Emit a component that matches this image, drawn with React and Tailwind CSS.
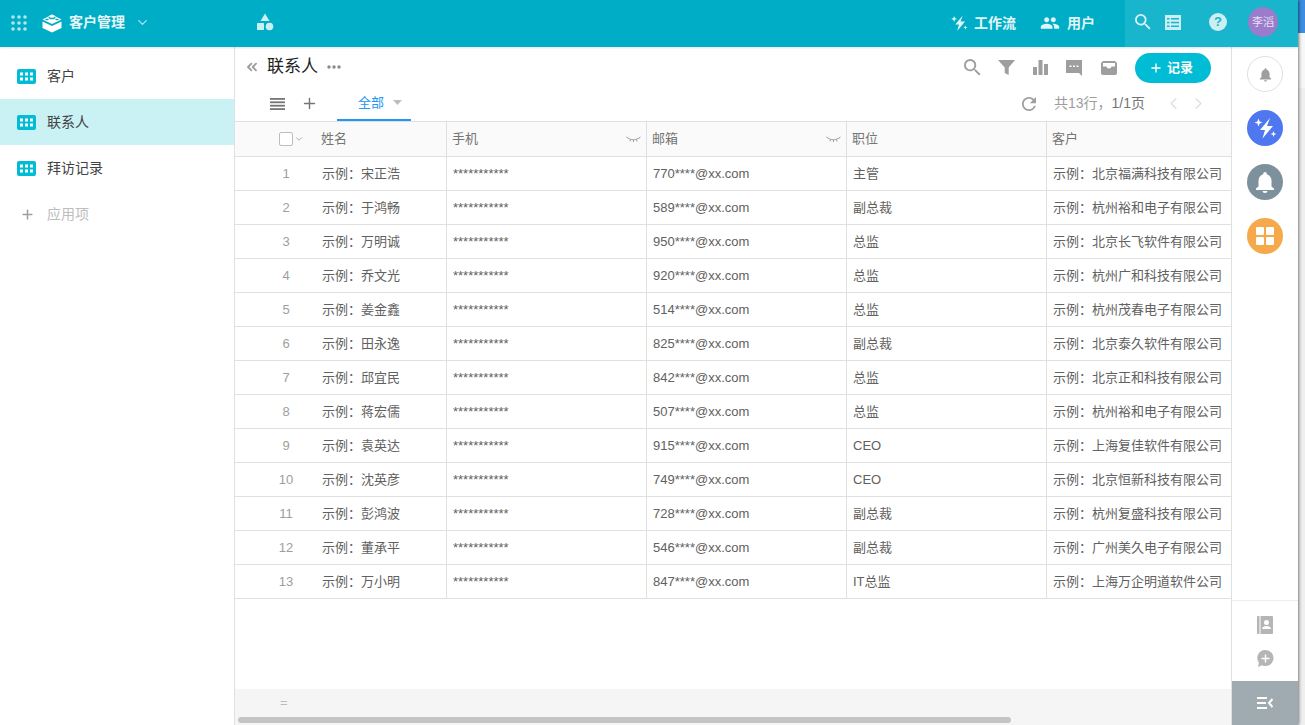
import React from 'react';
import { Plus, ChevronLeft, ChevronRight, ChevronDown, ChevronsLeft } from 'lucide-react';

const FONT = '"Liberation Sans","Noto Sans CJK SC",sans-serif';

const rows = [
  ['宋正浩', '770', '主管', '北京福满科技有限公司'],
  ['于鸿畅', '589', '副总裁', '杭州裕和电子有限公司'],
  ['万明诚', '950', '总监', '北京长飞软件有限公司'],
  ['乔文光', '920', '总监', '杭州广和科技有限公司'],
  ['姜金鑫', '514', '总监', '杭州茂春电子有限公司'],
  ['田永逸', '825', '副总裁', '北京泰久软件有限公司'],
  ['邱宜民', '842', '总监', '北京正和科技有限公司'],
  ['蒋宏儒', '507', '总监', '杭州裕和电子有限公司'],
  ['袁英达', '915', 'CEO', '上海复佳软件有限公司'],
  ['沈英彦', '749', 'CEO', '北京恒新科技有限公司'],
  ['彭鸿波', '728', '副总裁', '杭州复盛科技有限公司'],
  ['董承平', '546', '副总裁', '广州美久电子有限公司'],
  ['万小明', '847', 'IT总监', '上海万企明道软件公司'],
];

function GridIcon() {
  return (
    <svg width="19" height="15" viewBox="0 0 19 15">
      <rect width="19" height="15" rx="2" fill="#00bcd4" />
      <g fill="#fff">
        <rect x="3" y="3.5" width="3" height="3" /><rect x="8" y="3.5" width="3" height="3" /><rect x="13" y="3.5" width="3" height="3" />
        <rect x="3" y="8.5" width="3" height="3" /><rect x="8" y="8.5" width="3" height="3" /><rect x="13" y="8.5" width="3" height="3" />
      </g>
    </svg>
  );
}

function Spark({ size = 18, color = '#fff' }) {
  return (
    <svg width={size} height={size} viewBox="0 0 24 24" fill={color}>
      <path d="M17 2 7 14h5l-2.500 8.500L20 10h-6l3-8z" />
      <path d="M5.500 2.500l1.100 2.900 2.900 1.100-2.900 1.100-1.100 2.900-1.100-2.900L1.500 6.500l2.900-1.100z" />
      <path d="M20.500 15l.8 2.200 2.200.8-2.200.8-.8 2.200-.8-2.200-2.200-.8 2.200-.8z" />
    </svg>
  );
}

function Bell({ size = 16, color = '#9e9e9e' }) {
  return (
    <svg width={size} height={size} viewBox="0 0 24 24" fill={color}>
      <path d="M12 2a1.800 1.800 0 0 0-1.800 1.800v.5C7.200 5.100 5.500 7.700 5.500 11v5.500L3 18.500V20h18v-1.500l-2.500-2V11c0-3.300-1.700-5.900-4.700-6.700v-.5A1.800 1.800 0 0 0 12 2z" />
      <path d="M9.500 21h5a2.500 2 0 0 1-5 0z" />
    </svg>
  );
}

function SearchIcon({ size, color, className }) {
  return (
    <svg className={className} width={size} height={size} viewBox="3 3 18 18" fill={color}>
      <path d="M15.500 14h-.79l-.28-.27A6.471 6.471 0 0 0 16 9.500 6.500 6.500 0 1 0 9.500 16c1.610 0 3.090-.59 4.230-1.570l.27.28v.79l5 4.990L20.490 19l-4.990-5zm-6 0C7.010 14 5 11.990 5 9.500S7.010 5 9.500 5 14 7.010 14 9.500 11.990 14 9.500 14z" />
    </svg>
  );
}

function Eye() {
  return (
    <svg width="15" height="7" viewBox="0 0 15 7" fill="none" stroke="#9e9e9e" strokeWidth="1">
      <path d="M1.500 1.500C4 4.500 11 4.500 13.500 1.500" />
      <path d="M.5 1 2.500 2.500M4.500 3.500 4 5.500M7.500 4V6M10.500 3.500 11 5.500M14.500 1 12.500 2.500" />
    </svg>
  );
}

function Header({ title, eye, className }) {
  return (
    <div className={`flex items-center justify-between pl-[5px] pr-[5px] border-r border-[#e0e0e0] shrink-0 ${className}`}>
      <span className="text-[13px] text-[#757575]">{title}</span>
      {eye && <Eye />}
    </div>
  );
}

export default function App() {
  return (
    <div className="relative w-[1305px] h-[725px] overflow-hidden bg-[#f2f2f2] flex" style={{ fontFamily: FONT }}>
      <div className="w-[1298px] h-full flex flex-col bg-white shrink-0 shadow-[1px_0_3px_rgba(0,0,0,0.5)] z-10">
        {/* top bar */}
        <header className="h-[47px] shrink-0 bg-[#00adc7] flex items-center text-white shadow-[0_1px_2px_rgba(0,0,0,0.12)] z-10">
          <div className="w-[235px] shrink-0 flex items-center pl-[11px] mb-[2px]">
            <svg width="16" height="16" viewBox="0 0 16 16" fill="#b3e6ee">
              {[2, 8, 14].map((y) => [2, 8, 14].map((x) => <circle key={`${x}-${y}`} cx={x} cy={y} r="1.800" />))}
            </svg>
            <svg className="ml-[15px]" width="20" height="21" viewBox="0 0 20 21" fill="#fff">
              <path d="M10 2.500 19.500 7.500 10 12 .5 7.500z" />
              <path d="M.5 9.500 10 14l9.500-4.500v6.500L10 20.500.5 16z" />
              <ellipse cx="10" cy="5.500" rx="3.500" ry="1.800" fill="#00adc7" />
              <ellipse cx="10" cy="4.200" rx="2.800" ry="1.500" fill="#fff" />
              <ellipse cx="5" cy="7.500" rx="1.800" ry=".8" fill="#00adc7" />
              <ellipse cx="15" cy="7.500" rx="1.800" ry=".8" fill="#00adc7" />
            </svg>
            <span className="ml-[7px] text-[14px] font-bold text-[#e6f7fa]">客户管理</span>
            <ChevronDown className="ml-[10px] text-[#b3e6ee]" size={15} strokeWidth={2} />
          </div>
          <svg className="ml-[21px] mb-[3px]" width="18" height="18" viewBox="0 0 18 18" fill="#cceff4">
            <path d="M9 .5 13.500 8h-9z" />
            <rect x="1" y="10" width="7" height="7" rx=".5" />
            <circle cx="13.500" cy="13.500" r="3.800" />
          </svg>
          <div className="flex-1" />
          <div className="flex items-center text-[#e0f5f8] mb-[1px]">
            <Spark size={18} color="#e0f5f8" />
            <span className="ml-[6px] text-[14px] font-bold">工作流</span>
            <svg className="ml-[24px]" width="20" height="20" viewBox="0 0 24 24" fill="#e0f5f8">
              <path d="M16 11c1.700 0 3-1.300 3-3s-1.300-3-3-3-3 1.300-3 3 1.300 3 3 3zm-8 0c1.700 0 3-1.300 3-3S9.700 5 8 5 5 6.300 5 8s1.300 3 3 3zm0 2c-2.300 0-7 1.200-7 3.500V19h14v-2.500C15 14.200 10.300 13 8 13zm8 0c-.3 0-.6 0-1 .1 1.200.8 2 1.900 2 3.400V19h6v-2.500c0-2.300-4.700-3.500-7-3.500z" />
            </svg>
            <span className="ml-[7px] text-[14px] font-bold">用户</span>
          </div>
          <div className="ml-[30px] w-[173px] h-full bg-[#19b5cc] flex items-center shrink-0">
            <SearchIcon className="ml-[10px] mb-[3px]" size={16} color="#d9f4f7" />
            <svg className="ml-[14px] mb-[3px]" width="16" height="15" viewBox="0 0 16 15" fill="#cceff4">
              <path d="M0 0h16v15H0z" />
              <g fill="#19b5cc">
                <rect x="2" y="3" width="2.500" height="1.500" /><rect x="6" y="3" width="8" height="1.500" />
                <rect x="2" y="6.800" width="2.500" height="1.500" /><rect x="6" y="6.800" width="8" height="1.500" />
                <rect x="2" y="10.500" width="2.500" height="1.500" /><rect x="6" y="10.500" width="8" height="1.500" />
              </g>
            </svg>
            <div className="ml-[28px] mb-[3px] w-[18px] h-[18px] rounded-full bg-[#cceff4] flex items-center justify-center text-[13px] font-bold text-[#19b5cc]">?</div>
            <div className="ml-[21px] mb-[3px] w-[30px] h-[30px] rounded-full bg-[#9b7bcb] flex items-center justify-center text-[11px] text-[#e8e0f4]">李滔</div>
          </div>
        </header>

        <div className="flex-1 flex min-h-0">
          {/* sidebar */}
          <aside className="w-[235px] shrink-0 border-r border-[#e0e0e0] pt-[6px] flex flex-col text-[14px] text-[#424242]">
            {['客户', '联系人', '拜访记录'].map((n, i) => (
              <div key={n} className={`h-[46px] flex items-center pl-[17px] ${i === 1 ? 'bg-[#caf1f4]' : ''}`}>
                <GridIcon />
                <span className="ml-[11px]">{n}</span>
              </div>
            ))}
            <div className="h-[46px] flex items-center pl-[20px] text-[#bdbdbd]">
              <Plus size={15} strokeWidth={2.4} className="text-[#9e9e9e]" />
              <span className="ml-[12px]">应用项</span>
            </div>
          </aside>

          {/* main */}
          <main className="w-[996px] shrink-0 flex flex-col min-h-0">
            <div className="h-[39px] shrink-0 flex items-center pt-[2px] pl-[9px] pr-[20px]">
              <div className="flex items-center mb-[2px]">
                <ChevronsLeft size={16} strokeWidth={2.8} className="text-[#9e9e9e]" />
                <span className="ml-[7px] text-[17px] text-[#212121]">联系人</span>
                <svg className="ml-[9px]" width="14" height="4" viewBox="0 0 14 4" fill="#8a8a8a"><circle cx="2" cy="2" r="1.700" /><circle cx="7" cy="2" r="1.700" /><circle cx="12" cy="2" r="1.700" /></svg>
              </div>
              <div className="flex-1" />
              <SearchIcon size={17} color="#9e9e9e" />
              <svg className="ml-[17px]" width="17" height="15" viewBox="0 0 17 15" fill="#9e9e9e"><path d="M0 0h17l-6.300 7.500V15l-4-2V7.500z" /></svg>
              <svg className="ml-[18px]" width="15" height="15" viewBox="0 0 15 15" fill="#9e9e9e"><rect y="7" width="4" height="8" /><rect x="5.500" width="4" height="15" /><rect x="11" y="4" width="4" height="11" /></svg>
              <svg className="ml-[18px]" width="16" height="16" viewBox="0 0 16 16" fill="#9e9e9e"><path d="M0 0h16v16l-3-3H0z" /><g fill="#fff"><rect x="3.500" y="5.500" width="2" height="1.500" /><rect x="7" y="5.500" width="2" height="1.500" /><rect x="10.500" y="5.500" width="2" height="1.500" /></g></svg>
              <svg className="ml-[19px]" width="16" height="14" viewBox="0 0 16 14" fill="#9e9e9e"><path d="M2 0h12l2 2v10a2 2 0 0 1-2 2H2a2 2 0 0 1-2-2V2z" /><path d="M2 2h12v3.500h-3.500a2.500 2 0 0 1-5 0H2z" fill="#fff" /></svg>
              <button className="ml-[18px] w-[76px] h-[30px] rounded-full bg-[#00bcd4] text-white text-[13px] font-bold flex items-center justify-center">
                <Plus size={14} strokeWidth={2.4} />
                <span className="ml-[4px] mr-[4px]">记录</span>
              </button>
            </div>

            <div className="h-[35px] shrink-0 flex items-center">
              <svg className="ml-[35px]" width="15" height="12" viewBox="0 0 15 12" fill="#757575"><rect width="15" height="1.800" /><rect y="3.400" width="15" height="1.800" /><rect y="6.800" width="15" height="1.800" /><rect y="10.200" width="15" height="1.800" /></svg>
              <Plus size={17} strokeWidth={2} className="ml-[16px] mb-[1px] text-[#757575]" />
              <div className="ml-[19px] w-[74px] h-full border-b-2 border-[#2196f3] flex items-center pl-[21px] text-[13px] text-[#2196f3]">
                全部
                <svg className="ml-[9px]" width="9" height="5" viewBox="0 0 9 5" fill="#bdbdbd"><path d="M0 0h9L4.500 5z" /></svg>
              </div>
              <div className="flex-1" />
              <svg width="14" height="14" viewBox="4 4 16 16" fill="#9e9e9e"><path d="M17.650 6.350A7.958 7.958 0 0 0 12 4c-4.420 0-7.990 3.580-7.990 8s3.570 8 7.990 8c3.730 0 6.840-2.550 7.730-6h-2.080A5.990 5.990 0 0 1 12 18c-3.310 0-6-2.690-6-6s2.690-6 6-6c1.660 0 3.140.69 4.220 1.780L13 11h7V4l-2.350 2.350z" /></svg>
              <span className="ml-[18px] text-[14px] text-[#9e9e9e]">共13行，<span className="text-[#757575]">1/1页</span></span>
              <ChevronLeft size={19} className="ml-[19px] text-[#e0e0e0]" />
              <ChevronRight size={19} className="ml-[6px] mr-[23px] text-[#e0e0e0]" />
            </div>

            {/* table */}
            <div className="flex-1 min-h-0 overflow-hidden border-t border-[#e0e0e0]">
              <div className="h-[35px] flex bg-[#fafafa] border-b border-[#e0e0e0] pl-px">
                <div className="w-[211px] shrink-0 flex items-center border-r border-[#e0e0e0]">
                  <div className="ml-[43px] w-[14px] h-[14px] rounded-[2px] border border-[#bdbdbd] bg-white" />
                  <ChevronDown size={10} className="ml-[1px] text-[#9e9e9e]" />
                  <span className="ml-[17px] text-[13px] text-[#757575]">姓名</span>
                </div>
                <Header title="手机" eye className="w-[200px]" />
                <Header title="邮箱" eye className="w-[200px]" />
                <Header title="职位" className="w-[200px]" />
                <Header title="客户" className="w-[185px] border-r-0" />
              </div>
              {rows.map((r, i) => (
                <div key={i} className="h-[34px] flex border-b border-[#e0e0e0] text-[13px] text-[#616161] pl-px">
                  <div className="w-[211px] shrink-0 flex items-center border-r border-[#e0e0e0]">
                    <span className="w-[50px] text-center text-[#9e9e9e] ml-[25px]">{i + 1}</span>
                    <span className="ml-[11px]">示例：{r[0]}</span>
                  </div>
                  <div className="w-[200px] shrink-0 flex items-center pl-[6px] border-r border-[#e0e0e0]">***********</div>
                  <div className="w-[200px] shrink-0 flex items-center pl-[6px] border-r border-[#e0e0e0]">{r[1]}****@xx.com</div>
                  <div className="w-[200px] shrink-0 flex items-center pl-[6px] border-r border-[#e0e0e0]">{r[2]}</div>
                  <div className="w-[185px] shrink-0 flex items-center pl-[6px] whitespace-nowrap">示例：{r[3]}</div>
                </div>
              ))}
            </div>

            <div className="h-[28px] shrink-0 bg-[#f5f5f5] flex items-center">
              <span className="ml-[45px] text-[13px] text-[#bdbdbd]">=</span>
            </div>
            <div className="h-[8px] shrink-0 bg-[#f5f5f5] px-[3px]">
              <div className="w-[773px] h-[6px] rounded-full bg-[#c4c4c4]" />
            </div>
          </main>

          {/* right rail */}
          <aside className="w-[67px] shrink-0 border-l border-[#e0e0e0] flex flex-col items-center">
            <div className="mt-[9px] w-[36px] h-[36px] rounded-full border border-[#e0e0e0] flex items-center justify-center"><Bell size={15} /></div>
            <div className="mt-[18px] w-[36px] h-[36px] rounded-full bg-[#4f78f0] flex items-center justify-center"><Spark size={24} /></div>
            <div className="mt-[18px] w-[36px] h-[36px] rounded-full bg-[#7d919c] flex items-center justify-center"><Bell size={24} color="#fff" /></div>
            <div className="mt-[18px] w-[36px] h-[36px] rounded-full bg-[#f5a94a] flex items-center justify-center">
              <div className="grid grid-cols-2 gap-[2px]">
                {[0, 1, 2, 3].map((k) => <div key={k} className="w-[8px] h-[8px] rounded-[1px] bg-white" />)}
              </div>
            </div>
            <div className="flex-1" />
            <div className="w-full border-t border-[#eeeeee] flex flex-col items-center pt-[15px] pb-[14px]">
              <svg width="16" height="18" viewBox="0 0 16 18" fill="#b5b5b5">
                <path d="M1 0h14a1 1 0 0 1 1 1v16a1 1 0 0 1-1 1H1a1 1 0 0 1-1-1V1a1 1 0 0 1 1-1z" />
                <rect x="2.500" width="1" height="18" fill="#fff" />
                <circle cx="9.500" cy="6.500" r="2.500" fill="#fff" />
                <path d="M5 13c0-2 2-3 4.500-3s4.500 1 4.500 3z" fill="#fff" />
              </svg>
              <svg className="mt-[16px]" width="17" height="17" viewBox="0 0 17 17" fill="#b5b5b5">
                <path d="M8.500 0a8 8 0 1 1-3.500 15.200L1 17l.9-4.200A8 8 0 0 1 8.500 0z" />
                <path d="M7.800 4.500h1.400v3.300h3.300v1.400H9.200v3.300H7.800V9.200H4.500V7.800h3.300z" fill="#fff" />
              </svg>
            </div>
            <div className="w-full h-[44px] bg-[#9fabb0] flex items-center justify-center">
              <svg width="16" height="12" viewBox="0 0 16 12" fill="none" stroke="#fff" strokeWidth="2">
                <path d="M0 1h10M0 6h9M0 11h10M15.500 2 12 6l3.500 4" />
              </svg>
            </div>
          </aside>
        </div>
      </div>
      <div className="flex-1 flex flex-col">
        <div className="h-[33px] bg-[#3b8ee0]" />
        <div className="h-[55px] bg-[#f7f7f7]" />
        <div className="flex-1 bg-[#efefef]" />
      </div>
    </div>
  );
}
